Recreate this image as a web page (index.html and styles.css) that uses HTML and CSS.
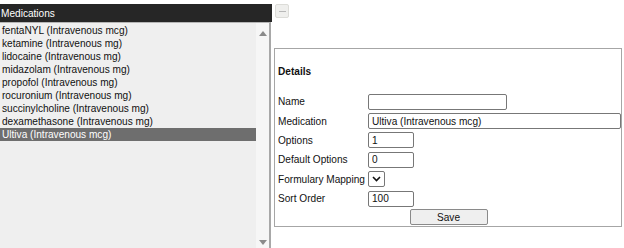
FILE: index.html
```html
<!DOCTYPE html>
<html>
<head>
<meta charset="utf-8">
<link rel="stylesheet" href="styles.css">
</head>
<body>
<div class="page">
  <div class="left">
    <div class="header">Medications</div>
    <div class="listbox">
      <ul class="items">
        <li>fentaNYL (Intravenous mcg)</li>
        <li>ketamine (Intravenous mg)</li>
        <li>lidocaine (Intravenous mg)</li>
        <li>midazolam (Intravenous mg)</li>
        <li>propofol (Intravenous mg)</li>
        <li>rocuronium (Intravenous mg)</li>
        <li>succinylcholine (Intravenous mg)</li>
        <li>dexamethasone (Intravenous mg)</li>
        <li class="selected">Ultiva (Intravenous mcg)</li>
      </ul>
      <div class="scrollbar">
        <span class="arrow up"></span>
        <span class="arrow down"></span>
      </div>
    </div>
  </div>
  <div class="right">
    <button class="minus" type="button"><span class="dash"></span></button>
    <div class="panel">
      <div class="title">Details</div>
      <div class="form">
        <label>Name</label>
        <div><input class="inp name" type="text" value=""></div>
        <label>Medication</label>
        <div><input class="inp med" type="text" value="Ultiva (Intravenous mcg)"></div>
        <label>Options</label>
        <div><input class="inp short" type="text" value="1"></div>
        <label>Default Options</label>
        <div><input class="inp short" type="text" value="0"></div>
        <label>Formulary Mapping</label>
        <div><span class="select"><svg width="9" height="6" viewBox="0 0 9 6"><path d="M1 1 L4.5 4.5 L8 1" fill="none" stroke="#111" stroke-width="1.6"/></svg></span></div>
        <label>Sort Order</label>
        <div><input class="inp short" type="text" value="100"></div>
      </div>
      <div class="actions"><button class="save" type="button">Save</button></div>
    </div>
  </div>
</div>
</body>
</html>
```
FILE: styles.css
```css
* { box-sizing: border-box; }
html, body { margin: 0; padding: 0; background: #fff; }
body {
  font-family: "Liberation Sans", Arial, sans-serif;
  font-size: 10.1px;
  color: #111;
  width: 624px;
  height: 248px;
  overflow: hidden;
}
.page {
  display: flex;
  padding-top: 4px;
}
.left {
  width: 272px;
  display: flex;
  flex-direction: column;
}
.header {
  height: 18px;
  line-height: 19px;
  background: #262626;
  color: #fff;
  padding-left: 1px;
}
.listbox {
  height: 226px;
  width: 271px;
  display: flex;
  background: #efefef;
  border-top: 1px solid #b5b5b5;
  border-right: 2px solid #a8a8a8;
}
.items {
  list-style: none;
  margin: 0;
  padding: 1px 0 0 0;
  flex: 1;
}
.items li {
  height: 13px;
  line-height: 13px;
  padding-left: 2px;
  white-space: nowrap;
}
.items li.selected {
  background: #6e6e6e;
  color: #fff;
}
.scrollbar {
  width: 13px;
  background: #f6f6f6;
  display: flex;
  flex-direction: column;
  justify-content: space-between;
  align-items: center;
  padding: 8px 0 3px;
}
.arrow {
  width: 0;
  height: 0;
  border-left: 4px solid transparent;
  border-right: 4px solid transparent;
}
.arrow.up { border-bottom: 5px solid #8a8a8a; }
.arrow.down { border-top: 5px solid #8a8a8a; }
.right {
  margin-left: 2px;
  width: 348px;
  display: flex;
  flex-direction: column;
  align-items: flex-start;
}
.minus {
  margin: 0 0 0 1px;
  width: 14px;
  height: 14px;
  padding: 0;
  background: #efefed;
  border: 1px solid #dcdcd8;
  border-radius: 2px;
  display: flex;
  align-items: center;
  justify-content: center;
}
.dash {
  width: 7px;
  height: 1px;
  background: #b8b8b8;
}
.panel {
  margin-top: 30px;
  width: 348px;
  height: 179px;
  border: 1px solid #a6a6a6;
  padding: 16px 0 0 3px;
}
.title {
  font-weight: bold;
  line-height: 13px;
  margin-bottom: 14px;
}
.form {
  display: grid;
  grid-template-columns: 90px auto;
  grid-auto-rows: 19.4px;
  align-items: center;
}
.form label { white-space: nowrap; }
.form > div { display: flex; align-items: center; }
.inp {
  height: 16px;
  border: 1px solid #777;
  border-radius: 2px;
  padding: 0 3px;
  font: inherit;
  color: #111;
  background: #fff;
  margin: 0;
}
.inp.name { width: 139px; }
.inp.med { width: 253px; }
.inp.short { width: 46px; }
.select {
  width: 17px;
  height: 16px;
  border: 1px solid #777;
  border-radius: 2px;
  display: flex;
  align-items: center;
  justify-content: center;
  background: #fff;
}
.actions {
  display: flex;
  justify-content: center;
  margin-top: 1px;
  padding-right: 2px;
}
.save {
  width: 78px;
  height: 16px;
  padding: 0;
  font: inherit;
  color: #111;
  background: #efefef;
  border: 1px solid #8a8a8a;
  border-radius: 2px;
}
```
